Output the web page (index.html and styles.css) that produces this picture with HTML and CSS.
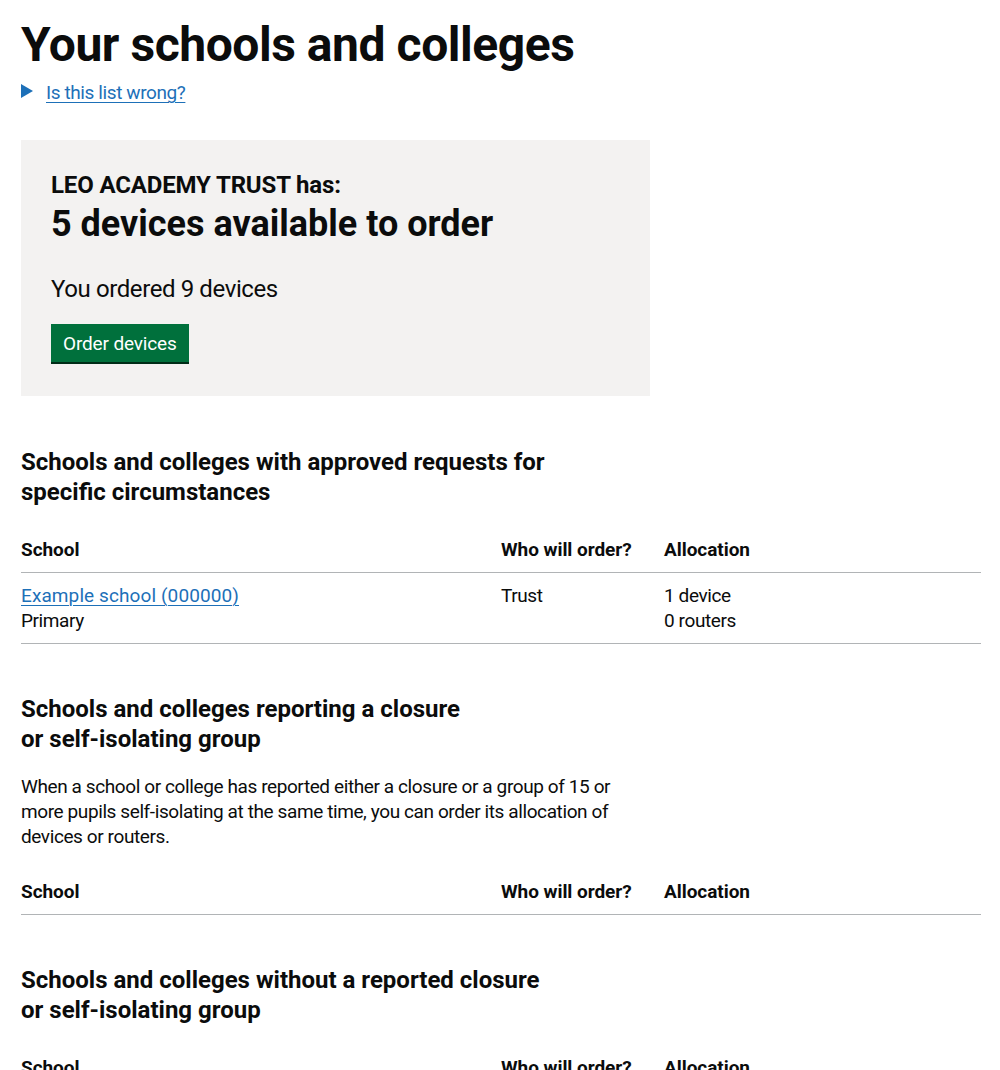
FILE: index.html
```html
<!DOCTYPE html>
<html lang="en">
<head>
<meta charset="utf-8">
<title>Your schools and colleges</title>
<link rel="stylesheet" href="styles.css">
</head>
<body>
<div class="width-container">
  <main class="main-wrapper">
    <div class="grid-row">
      <div class="column-two-thirds">
        <h1 class="heading-xl">Your schools and colleges</h1>
        <details class="details">
          <summary class="details-summary"><span class="details-summary-text">Is this list wrong?</span></summary>
        </details>
        <div class="panel">
          <h2 class="panel-title">
            <span class="panel-caption">LEO ACADEMY TRUST has:</span>
            <span class="panel-count">5 devices available to order</span>
          </h2>
          <p class="body-l">You ordered 9 devices</p>
          <a href="#" class="button">Order devices</a>
        </div>
        <h2 class="heading-m">Schools and colleges with approved requests for<br>specific circumstances</h2>
      </div>
    </div>

    <table class="table">
      <colgroup><col class="col-school"><col class="col-who"><col></colgroup>
      <thead>
        <tr><th class="table-header">School</th><th class="table-header">Who will order?</th><th class="table-header">Allocation</th></tr>
      </thead>
      <tbody>
        <tr>
          <td class="table-cell"><a href="#" class="link">Example school (000000)</a><br>Primary</td>
          <td class="table-cell">Trust</td>
          <td class="table-cell">1 device<br>0 routers</td>
        </tr>
      </tbody>
    </table>

    <div class="grid-row">
      <div class="column-two-thirds">
        <h2 class="heading-m">Schools and colleges reporting a closure<br>or self-isolating group</h2>
        <p class="body">When a school or college has reported either a closure or a group of 15 or more pupils self-isolating at the same time, you can order its allocation of devices or routers.</p>
      </div>
    </div>

    <table class="table">
      <colgroup><col class="col-school"><col class="col-who"><col></colgroup>
      <thead>
        <tr><th class="table-header">School</th><th class="table-header">Who will order?</th><th class="table-header">Allocation</th></tr>
      </thead>
    </table>

    <div class="grid-row">
      <div class="column-two-thirds">
        <h2 class="heading-m">Schools and colleges without a reported closure<br>or self-isolating group</h2>
      </div>
    </div>

    <table class="table">
      <colgroup><col class="col-school"><col class="col-who"><col></colgroup>
      <thead>
        <tr><th class="table-header">School</th><th class="table-header">Who will order?</th><th class="table-header">Allocation</th></tr>
      </thead>
    </table>
  </main>
</div>
</body>
</html>
```
FILE: styles.css
```css
* { box-sizing: border-box; }

html, body {
  margin: 0;
  padding: 0;
  background: #ffffff;
}

body {
  font-family: Roboto, "Liberation Sans", Arial, sans-serif;
  color: #0b0c0c;
  -webkit-font-smoothing: antialiased;
}

.width-container {
  width: 960px;
  margin: 0 0 0 21px;
}

.main-wrapper {
  display: block;
  padding-top: 20px;
}

.grid-row {
  display: flex;
  margin: 0 -15px;
}

.column-two-thirds {
  width: 659px;
  padding: 0 15px;
}

.heading-xl {
  margin: 0 0 10px;
  font-size: 48px;
  line-height: 50px;
  font-weight: 700;
  letter-spacing: -0.45px;
}

.details {
  margin: 0 0 30px;
  font-size: 19px;
  line-height: 25px;
  letter-spacing: -0.4px;
}

.details-summary {
  display: inline-block;
  position: relative;
  margin-bottom: 5px;
  padding-left: 25px;
  color: #1d70b8;
  cursor: pointer;
  list-style: none;
}

.details-summary::-webkit-details-marker { display: none; }

.details-summary::before {
  content: "";
  position: absolute;
  left: 0;
  top: 4px;
  width: 0;
  height: 0;
  border-style: solid;
  border-color: transparent;
  border-width: 7px 0 7px 12.124px;
  border-left-color: #1d70b8;
}

.details-summary-text {
  text-decoration: underline;
  text-decoration-thickness: 1px;
  text-underline-offset: 0.16em;
}

.panel {
  background: #f3f2f1;
  padding: 30px 30px 34px;
  margin-bottom: 51px;
}

.panel-title {
  margin: 0;
  font-weight: 700;
}

.panel-caption {
  display: block;
  font-size: 24px;
  line-height: 30px;
  letter-spacing: -0.15px;
}

.panel-count {
  display: block;
  margin-top: 4px;
  font-size: 36px;
  line-height: 40px;
  letter-spacing: 0;
}

.body-l {
  margin: 30px 0 20px;
  font-size: 24px;
  line-height: 30px;
  font-weight: 400;
  letter-spacing: -0.4px;
}

.button {
  display: inline-block;
  padding: 8px 10px 7px;
  border: 2px solid transparent;
  background: #00703c;
  box-shadow: 0 2px 0 #002d18;
  color: #ffffff;
  font-size: 19px;
  line-height: 19px;
  letter-spacing: -0.15px;
  text-decoration: none;
}

.heading-m {
  margin: 0 0 20px;
  font-size: 24px;
  line-height: 30px;
  font-weight: 700;
  letter-spacing: 0;
}

.body {
  margin: 0 0 20px;
  font-size: 19px;
  line-height: 25px;
  letter-spacing: -0.4px;
}

.table {
  width: 100%;
  margin-bottom: 50px;
  border-collapse: collapse;
  border-spacing: 0;
  table-layout: fixed;
  font-size: 19px;
  line-height: 25px;
}

.col-school { width: 480px; }
.col-who { width: 163px; }

.table-header,
.table-cell {
  padding: 10px 20px 10px 0;
  border-bottom: 1px solid #b1b4b6;
  text-align: left;
  vertical-align: top;
}

.table-header {
  font-weight: 700;
  letter-spacing: -0.05px;
}

.table-cell {
  font-weight: 400;
  letter-spacing: -0.4px;
}

.link {
  color: #1d70b8;
  letter-spacing: 0.1px;
  text-decoration: underline;
  text-decoration-thickness: 1px;
  text-underline-offset: 0.16em;
}
```
